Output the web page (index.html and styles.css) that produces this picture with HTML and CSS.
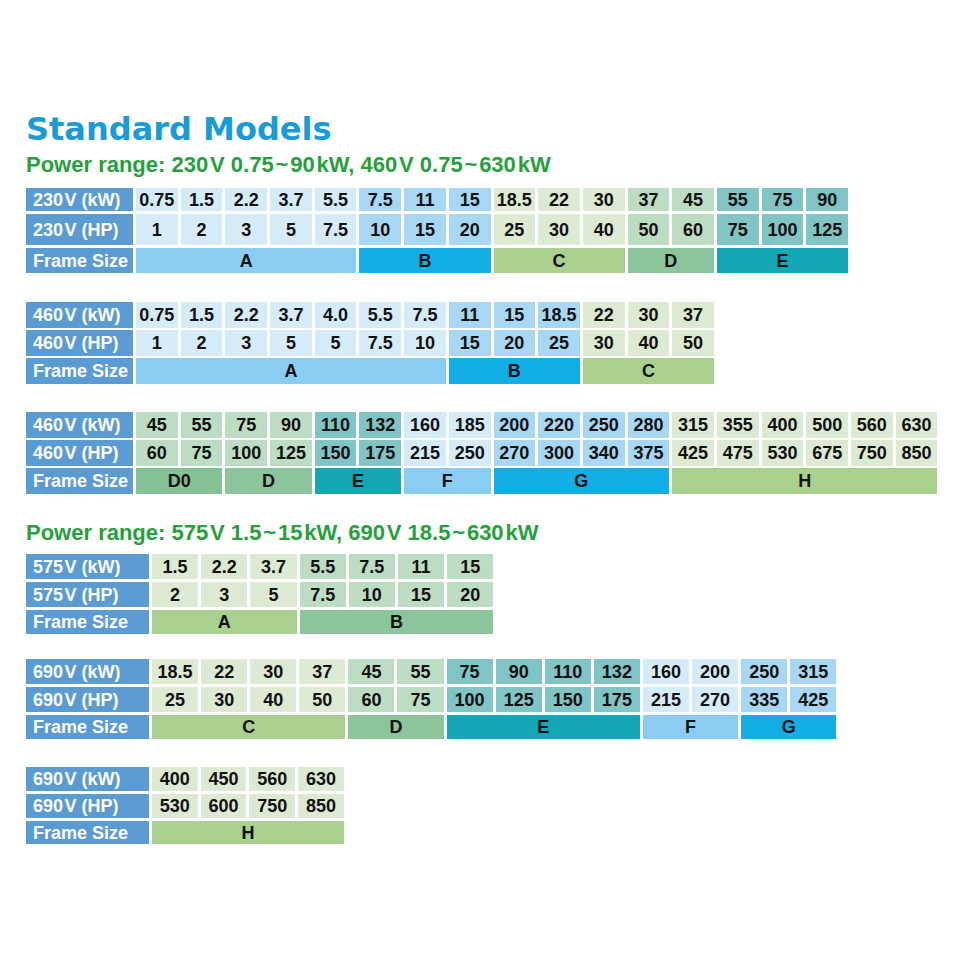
FILE: index.html
```html
<!DOCTYPE html>
<html lang="en">
<head>
<meta charset="utf-8">
<title>Standard Models</title>
<link rel="stylesheet" href="styles.css">
</head>
<body>
<main class="page">
  <h1 class="title">Standard Models</h1>
  <h2 class="sub">Power range: 230&#8202;V 0.75&#8202;~&#8202;90&#8202;kW, 460&#8202;V 0.75&#8202;~&#8202;630&#8202;kW</h2>

  <div class="tbl t1">
    <div class="hd">230&#8202;V (kW)</div>
    <div class="c vlb">0.75</div><div class="c vlb">1.5</div><div class="c vlb">2.2</div><div class="c vlb">3.7</div><div class="c vlb">5.5</div>
    <div class="c lb">7.5</div><div class="c lb">11</div><div class="c lb">15</div>
    <div class="c vlg">18.5</div><div class="c vlg">22</div><div class="c vlg">30</div>
    <div class="c mg">37</div><div class="c mg">45</div>
    <div class="c tl">55</div><div class="c tl">75</div><div class="c tl">90</div>

    <div class="hd">230&#8202;V (HP)</div>
    <div class="c vlb">1</div><div class="c vlb">2</div><div class="c vlb">3</div><div class="c vlb">5</div><div class="c vlb">7.5</div>
    <div class="c lb">10</div><div class="c lb">15</div><div class="c lb">20</div>
    <div class="c vlg">25</div><div class="c vlg">30</div><div class="c vlg">40</div>
    <div class="c mg">50</div><div class="c mg">60</div>
    <div class="c tl">75</div><div class="c tl">100</div><div class="c tl">125</div>

    <div class="hd">Frame Size</div>
    <div class="c f-sky s5">A</div>
    <div class="c f-blue s3">B</div>
    <div class="c f-lgreen s3">C</div>
    <div class="c f-green s2">D</div>
    <div class="c f-teal s3">E</div>
  </div>

  <div class="tbl t2">
    <div class="hd">460&#8202;V (kW)</div>
    <div class="c vlb">0.75</div><div class="c vlb">1.5</div><div class="c vlb">2.2</div><div class="c vlb">3.7</div><div class="c vlb">4.0</div><div class="c vlb">5.5</div><div class="c vlb">7.5</div>
    <div class="c lb">11</div><div class="c lb">15</div><div class="c lb">18.5</div>
    <div class="c vlg">22</div><div class="c vlg">30</div><div class="c vlg">37</div>

    <div class="hd">460&#8202;V (HP)</div>
    <div class="c vlb">1</div><div class="c vlb">2</div><div class="c vlb">3</div><div class="c vlb">5</div><div class="c vlb">5</div><div class="c vlb">7.5</div><div class="c vlb">10</div>
    <div class="c lb">15</div><div class="c lb">20</div><div class="c lb">25</div>
    <div class="c vlg">30</div><div class="c vlg">40</div><div class="c vlg">50</div>

    <div class="hd">Frame Size</div>
    <div class="c f-sky s7">A</div>
    <div class="c f-blue s3">B</div>
    <div class="c f-lgreen s3">C</div>
  </div>

  <div class="tbl t3">
    <div class="hd">460&#8202;V (kW)</div>
    <div class="c mg">45</div><div class="c mg">55</div><div class="c mg">75</div><div class="c mg">90</div>
    <div class="c tl">110</div><div class="c tl">132</div>
    <div class="c vlb">160</div><div class="c vlb">185</div>
    <div class="c lb">200</div><div class="c lb">220</div><div class="c lb">250</div><div class="c lb">280</div>
    <div class="c vlg">315</div><div class="c vlg">355</div><div class="c vlg">400</div><div class="c vlg">500</div><div class="c vlg">560</div><div class="c vlg">630</div>

    <div class="hd">460&#8202;V (HP)</div>
    <div class="c mg">60</div><div class="c mg">75</div><div class="c mg">100</div><div class="c mg">125</div>
    <div class="c tl">150</div><div class="c tl">175</div>
    <div class="c vlb">215</div><div class="c vlb">250</div>
    <div class="c lb">270</div><div class="c lb">300</div><div class="c lb">340</div><div class="c lb">375</div>
    <div class="c vlg">425</div><div class="c vlg">475</div><div class="c vlg">530</div><div class="c vlg">675</div><div class="c vlg">750</div><div class="c vlg">850</div>

    <div class="hd">Frame Size</div>
    <div class="c f-green0 s2">D0</div>
    <div class="c f-green s2">D</div>
    <div class="c f-teal s2">E</div>
    <div class="c f-sky s2">F</div>
    <div class="c f-blue s4">G</div>
    <div class="c f-lgreen s6">H</div>
  </div>

  <h2 class="sub sub2">Power range: 575&#8202;V 1.5&#8202;~&#8202;15&#8202;kW, 690&#8202;V 18.5&#8202;~&#8202;630&#8202;kW</h2>

  <div class="tbl t4">
    <div class="hd">575&#8202;V (kW)</div>
    <div class="c vlg">1.5</div><div class="c vlg">2.2</div><div class="c vlg">3.7</div>
    <div class="c mg">5.5</div><div class="c mg">7.5</div><div class="c mg">11</div><div class="c mg">15</div>

    <div class="hd">575&#8202;V (HP)</div>
    <div class="c vlg">2</div><div class="c vlg">3</div><div class="c vlg">5</div>
    <div class="c mg">7.5</div><div class="c mg">10</div><div class="c mg">15</div><div class="c mg">20</div>

    <div class="hd">Frame Size</div>
    <div class="c f-lgreen s3">A</div>
    <div class="c f-green s4">B</div>
  </div>

  <div class="tbl t5">
    <div class="hd">690&#8202;V (kW)</div>
    <div class="c vlg">18.5</div><div class="c vlg">22</div><div class="c vlg">30</div><div class="c vlg">37</div>
    <div class="c mg">45</div><div class="c mg">55</div>
    <div class="c tl">75</div><div class="c tl">90</div><div class="c tl">110</div><div class="c tl">132</div>
    <div class="c vlb">160</div><div class="c vlb">200</div>
    <div class="c lb">250</div><div class="c lb">315</div>

    <div class="hd">690&#8202;V (HP)</div>
    <div class="c vlg">25</div><div class="c vlg">30</div><div class="c vlg">40</div><div class="c vlg">50</div>
    <div class="c mg">60</div><div class="c mg">75</div>
    <div class="c tl">100</div><div class="c tl">125</div><div class="c tl">150</div><div class="c tl">175</div>
    <div class="c vlb">215</div><div class="c vlb">270</div>
    <div class="c lb">335</div><div class="c lb">425</div>

    <div class="hd">Frame Size</div>
    <div class="c f-lgreen s4">C</div>
    <div class="c f-green s2">D</div>
    <div class="c f-teal s4">E</div>
    <div class="c f-sky s2">F</div>
    <div class="c f-blue s2">G</div>
  </div>

  <div class="tbl t6">
    <div class="hd">690&#8202;V (kW)</div>
    <div class="c vlg">400</div><div class="c vlg">450</div><div class="c vlg">560</div><div class="c vlg">630</div>

    <div class="hd">690&#8202;V (HP)</div>
    <div class="c vlg">530</div><div class="c vlg">600</div><div class="c vlg">750</div><div class="c vlg">850</div>

    <div class="hd">Frame Size</div>
    <div class="c f-lgreen s4">H</div>
  </div>
</main>
</body>
</html>
```

FILE: styles.css
```css
html, body {
  margin: 0;
  padding: 0;
  background: #ffffff;
}

body {
  font-family: "Liberation Sans", Arial, sans-serif;
  color: #111111;
}

.page {
  padding: 111px 0 0 26px;
}

.title {
  margin: 0;
  font-family: "DejaVu Sans", sans-serif;
  font-weight: bold;
  font-size: 32px;
  line-height: 36px;
  color: #1a9ad7;
}

.sub {
  margin: 6px 0 0;
  font-family: "Liberation Sans", Arial, sans-serif;
  font-weight: bold;
  font-size: 22px;
  line-height: 24px;
  color: #25a03b;
}

.sub2 {
  margin-top: 27px;
}

.tbl {
  display: grid;
  gap: 3px;
  width: max-content;
}

.t1 {
  margin-top: 11px;
  grid-template-columns: 107px repeat(16, 41.7px);
  grid-template-rows: 23px 31px 25px;
}

.t2 {
  margin-top: 29px;
  row-gap: 2px;
  grid-template-columns: 107px repeat(13, 41.7px);
  grid-template-rows: 26px 26px 26px;
}

.t3 {
  margin-top: 28px;
  row-gap: 2px;
  grid-template-columns: 107px repeat(18, 41.7px);
  grid-template-rows: 26px 26px 26px;
}

.t4 {
  margin-top: 9px;
  grid-template-columns: 123px repeat(7, 46.2px);
  grid-template-rows: 25px 25px 24px;
}

.t5 {
  margin-top: 25px;
  grid-template-columns: 123px repeat(14, 46.1px);
  grid-template-rows: 25px 25px 24px;
}

.t6 {
  margin-top: 28px;
  grid-template-columns: 123px repeat(4, 45.7px);
  grid-template-rows: 24px 24px 23px;
}

.hd {
  background: #5b9bd3;
  color: #ffffff;
  font-weight: bold;
  font-size: 18px;
  line-height: 1;
  padding-left: 7px;
  display: flex;
  align-items: center;
  white-space: nowrap;
}

.c {
  display: flex;
  align-items: center;
  justify-content: center;
  font-weight: bold;
  font-size: 18px;
  line-height: 1;
  color: #111111;
  white-space: nowrap;
}

/* data cell tints */
.vlb { background: #d5ebf8; }
.lb  { background: #a7d7f3; }
.vlg { background: #dcead4; }
.mg  { background: #bcdcc3; }
.tl  { background: #80c4c5; }

/* frame size bands */
.f-sky    { background: #8bcdf2; }
.f-blue   { background: #14aee7; }
.f-lgreen { background: #a9d08e; }
.f-green  { background: #8cc59c; }
.f-green0 { background: #84c195; }
.f-teal   { background: #13a6b5; }

.s2 { grid-column: span 2; }
.s3 { grid-column: span 3; }
.s4 { grid-column: span 4; }
.s5 { grid-column: span 5; }
.s6 { grid-column: span 6; }
.s7 { grid-column: span 7; }
```
